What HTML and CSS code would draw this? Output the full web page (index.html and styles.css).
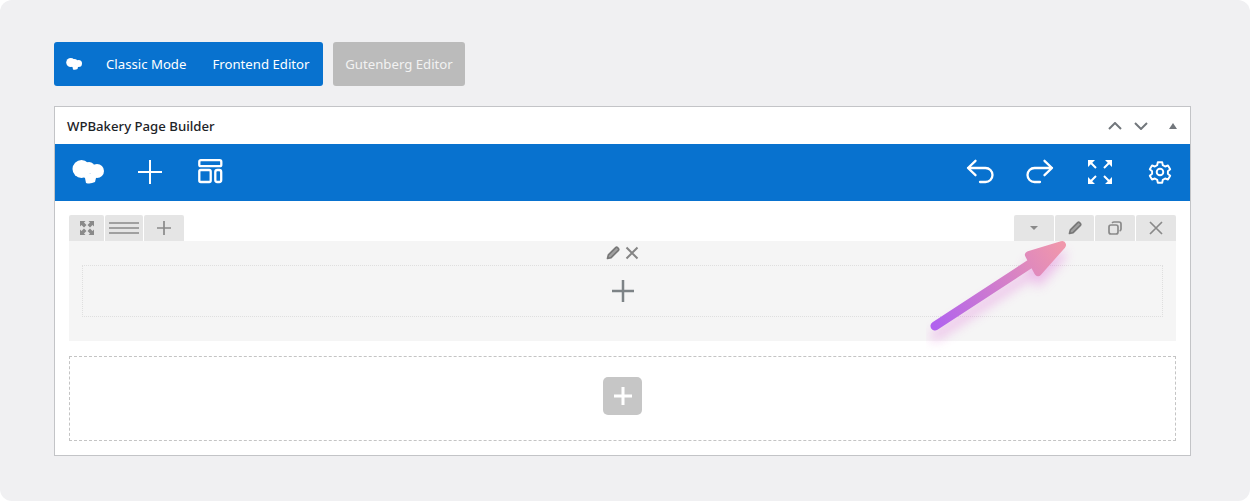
FILE: index.html
```html
<!DOCTYPE html>
<html lang="en">
<head>
<meta charset="utf-8">
<title>WPBakery Page Builder</title>
<link rel="stylesheet" href="styles.css">
</head>
<body>
<main class="frame">
  <div class="mode-row">
    <div class="mode-group">
      <svg class="mode-logo" viewBox="0 0 32 24" aria-hidden="true"><g class="fill-white"><circle cx="9.500" cy="9" r="9"/><circle cx="17" cy="8" r="6"/><circle cx="25" cy="11" r="7"/><path d="M8 14h17l-2 8c-3 1.500-6 2-9 1l-1-5z"/></g></svg>
      <span class="mode-link">Classic Mode</span>
      <span class="mode-link">Frontend Editor</span>
    </div>
    <div class="gutenberg">Gutenberg Editor</div>
  </div>

  <section class="box">
    <header class="box-head">
      <h2 class="box-title">WPBakery Page Builder</h2>
      <div class="box-arrows">
        <svg class="chev" viewBox="0 0 14 8"><path d="M1 7l6-6 6 6"/></svg>
        <svg class="chev chev-down" viewBox="0 0 14 8"><path d="M1 1l6 6 6-6"/></svg>
        <svg class="tri" viewBox="0 0 8 6"><path d="M4 0l4 6H0z"/></svg>
      </div>
    </header>

    <nav class="toolbar">
      <div class="tool-left">
        <svg class="tb-logo" viewBox="0 0 32 24" aria-hidden="true"><g class="fill-white"><circle cx="9.500" cy="9" r="9"/><circle cx="17" cy="8" r="6"/><circle cx="25" cy="11" r="7"/><path d="M8 14h17l-2 8c-3 1.500-6 2-9 1l-1-5z"/></g></svg>
        <svg class="tb-icon" viewBox="0 0 26 26"><path class="stroke-white" d="M13 1v24M1 13h24"/></svg>
        <svg class="tb-icon" viewBox="0 0 26 26"><g class="stroke-white bold"><rect x="2.300" y="1.200" width="22" height="6" rx="1.500"/><rect x="2.300" y="11" width="11.400" height="12" rx="1.500"/><rect x="18.300" y="11" width="5.900" height="12" rx="2"/></g></svg>
      </div>
      <div class="tool-right">
        <svg class="tb-wide" viewBox="0 0 28 26"><path class="stroke-white round bold" d="M9.500 1.800L2 9l7.500 7.200M2 9h17.500a7 7 0 0 1 0 14H14"/></svg>
        <svg class="tb-wide" viewBox="0 0 28 26"><path class="stroke-white round bold" d="M18.500 1.800L26 9l-7.500 7.200M26 9H8.500a7 7 0 0 0 0 14H14"/></svg>
        <svg class="tb-wide" viewBox="-1 0 28 26"><path class="stroke-white" d="M3 3l6 6M17 9l6-6M3 23l6-6M17 17l6 6"/><path class="fill-white" d="M1 1h7L1 8zM25 1v7l-7-7zM1 25v-7l7 7zM25 25h-7l7-7z"/></svg>
        <svg class="tb-wide" viewBox="-2 0 28 24"><g class="stroke-white thin round"><circle cx="12" cy="12" r="3.300"/><path d="M9.800 2.200h4.400l.6 3 2.300 1.300 2.900-1 2.200 3.800-2.300 2v2.400l2.300 2-2.200 3.800-2.900-1-2.300 1.300-.6 3H9.800l-.6-3-2.300-1.300-2.900 1-2.200-3.800 2.300-2v-2.400l-2.300-2L4 5.500l2.900 1 2.300-1.300z"/></g></svg>
      </div>
    </nav>

    <div class="canvas">
      <div class="row-block">
        <div class="row-tabs">
          <div class="tab-group">
            <span class="tab tab-s"><svg class="ti" viewBox="0 0 14 14"><path class="fill-grey" d="M0 0h5.500L4 1.500 6.500 4 4 6.500 1.500 4 0 5.500zM14 0v5.500L12.500 4 10 6.500 7.500 4 10 1.500 8.500 0zM0 14V8.500L1.500 10 4 7.500 6.500 10 4 12.500 5.500 14zM14 14H8.500l1.500-1.500L7.500 10 10 7.500l2.500 2.500L14 8.500z"/></svg></span>
            <span class="tab tab-m"><svg class="ti-lines" viewBox="0 0 30 12"><path class="stroke-lines" d="M0 1h30M0 6h30M0 11h30"/></svg></span>
            <span class="tab tab-l"><svg class="ti" viewBox="0 0 14 14"><path class="stroke-grey" d="M7 0v14M0 7h14"/></svg></span>
          </div>
          <div class="tab-group">
            <span class="tab tab-r"><svg class="ti-caret" viewBox="0 0 8 4"><path class="fill-grey" d="M0 0h8L4 4z"/></svg></span>
            <span class="tab tab-e"><svg class="ti" viewBox="0 0 14 14"><path class="pencil" d="M1.500 12.500l.9-3.600 7.300-7.300c.5-.5 1.300-.5 1.800 0l.9.900c.5.500.5 1.300 0 1.800l-7.300 7.300z"/></svg></span>
            <span class="tab tab-r"><svg class="ti" viewBox="0 0 14 14"><g class="stroke-grey round"><rect x="1" y="4" width="9" height="9" rx="2"/><path d="M4.500 1.500C5 1 5.500 1 6 1h5c1 0 2 1 2 2v5c0 .7-.3 1.200-.8 1.600"/></g></svg></span>
            <span class="tab tab-r"><svg class="ti" viewBox="0 0 14 14"><path class="stroke-grey" d="M1 1l12 12M13 1L1 13"/></svg></span>
          </div>
        </div>
        <div class="row-body">
          <div class="col-actions">
            <svg class="ca" viewBox="0 0 14 14"><path class="pencil" d="M1.500 12.500l.9-3.600 7.300-7.300c.5-.5 1.300-.5 1.800 0l.9.900c.5.500.5 1.300 0 1.800l-7.300 7.300z"/></svg>
            <svg class="ca" viewBox="0 0 14 14"><path class="stroke-x" d="M1.500 1.500l11 11M12.500 1.500l-11 11"/></svg>
          </div>
          <div class="column">
            <svg class="col-plus" viewBox="0 0 22 22"><path class="stroke-plus" d="M11 0v22M0 11h22"/></svg>
          </div>
        </div>
      </div>
      <div class="add-zone">
        <span class="add-btn"><svg class="add-plus" viewBox="0 0 18 18"><path class="stroke-add" d="M9 0v18M0 9h18"/></svg></span>
      </div>
    </div>
  </section>

  <svg class="arrow" viewBox="0 0 170 120" aria-hidden="true">
    <defs>
      <linearGradient id="ag" gradientUnits="userSpaceOnUse" x1="9" y1="90" x2="136" y2="9">
        <stop offset="0" stop-color="#b163ee"/>
        <stop offset="1" stop-color="#f097ab"/>
      </linearGradient>
      <filter id="ab" x="-30%" y="-30%" width="160%" height="160%"><feGaussianBlur stdDeviation="6"/></filter>
    </defs>
    <g filter="url(#ab)" opacity=".42" transform="translate(0 10)">
      <path d="M9 90L107 26" stroke="#e070d8" stroke-width="9" stroke-linecap="round" fill="none"/>
      <path d="M103 19L136 9 112 36z" fill="#e070d8" stroke="#e070d8" stroke-width="8" stroke-linejoin="round"/>
    </g>
    <path d="M9 90L107 26" stroke="url(#ag)" stroke-width="9" stroke-linecap="round" fill="none"/>
    <path d="M103 19L136 9 112 36z" fill="url(#ag)" stroke="url(#ag)" stroke-width="8" stroke-linejoin="round"/>
  </svg>
</main>
</body>
</html>
```
FILE: styles.css
```css
* { box-sizing: border-box; }
html, body { margin: 0; height: 100%; }
body { background: #fff; font-family: "Noto Sans", "Open Sans", sans-serif; }
svg { display: block; }

.frame {
  position: relative;
  width: 1250px;
  height: 501px;
  padding: 42px 59px 0 54px;
  background: #f0f0f2;
  border-radius: 12px;
}

.mode-row { display: flex; gap: 10px; height: 44px; }
.mode-group {
  display: flex;
  align-items: center;
  width: 269px;
  padding-left: 12px;
  background: #0872cf;
  border-radius: 3px;
  color: #fff;
  font-size: 13.200px;
}
.mode-logo { width: 16px; height: 12px; margin-right: 24px; }
.mode-link { margin-right: 26px; white-space: nowrap; }
.mode-link:last-child { margin-right: 0; }
.gutenberg {
  display: flex;
  align-items: center;
  justify-content: center;
  width: 132px;
  background: #bbb;
  border-radius: 3px;
  color: #f2f2f2;
  font-size: 13.200px;
}

.fill-white { fill: #fff; }
.stroke-white { fill: none; stroke: #fff; stroke-width: 2; }
.stroke-add { fill: none; stroke: #fff; stroke-width: 3; }
.bold { stroke-width: 2.300; }
.round { stroke-linecap: round; stroke-linejoin: round; }
.thin { stroke-width: 1.900; }
.fill-grey { fill: #8a8a8a; }
.stroke-grey { fill: none; stroke: #8a8a8a; stroke-width: 1.700; }
.stroke-lines { fill: none; stroke: #a0a0a0; stroke-width: 2; }
.stroke-x { fill: none; stroke: #858585; stroke-width: 2; }
.pencil { fill: #a0a0a0; stroke: #787878; stroke-width: 1.700; stroke-linejoin: round; }
.stroke-plus { fill: none; stroke: #7d8386; stroke-width: 2.500; }

.box {
  margin-top: 20px;
  height: 350px;
  background: #fff;
  border: 1px solid #c3c4c7;
}
.box-head {
  display: flex;
  align-items: center;
  justify-content: space-between;
  height: 37px;
  padding: 0 13px 0 12px;
}
.box-title {
  margin: 0;
  font-size: 13.200px;
  font-weight: 500;
  color: #1d2327;
}
.box-arrows { display: flex; align-items: center; }
.chev { width: 14px; height: 8px; fill: none; stroke: #72777c; stroke-width: 2; }
.chev-down { margin-left: 12px; }
.tri { width: 8px; height: 6px; margin-left: 21px; fill: #72777c; }

.toolbar {
  display: flex;
  align-items: center;
  justify-content: space-between;
  height: 57px;
  padding: 0 16px 0 17px;
  background: #0872cf;
}
.tool-left, .tool-right { display: flex; align-items: center; }
.tool-left { gap: 34px; }
.tool-right { gap: 32px; margin-top: -2px; }
.tb-logo { width: 32px; height: 24px; margin: -2px -1px 0 0; }
.tb-icon { width: 26px; height: 26px; margin-top: -2px; }
.tb-wide { width: 28px; height: 26px; }

.canvas { padding: 14px 14px 0; }
.row-tabs { display: flex; justify-content: space-between; height: 26px; }
.tab-group { display: flex; gap: 1px; }
.tab {
  display: flex;
  align-items: center;
  justify-content: center;
  height: 26px;
  background: #e5e5e5;
  border-radius: 2px 2px 0 0;
}
.tab-s { width: 35px; }
.tab-m { width: 38px; }
.tab-l { width: 40px; }
.tab-r { width: 40px; }
.tab-e { width: 39px; }
.ti { width: 14px; height: 14px; }
.ti-lines { width: 30px; height: 12px; }
.ti-caret { width: 8px; height: 4px; }

.row-body {
  height: 100px;
  padding: 0 13px;
  background: #f5f5f5;
}
.col-actions {
  display: flex;
  align-items: center;
  justify-content: center;
  gap: 5px;
  height: 24px;
}
.ca { width: 14px; height: 14px; }
.column {
  display: flex;
  align-items: center;
  justify-content: center;
  height: 52px;
  border: 1px dotted #dfdfdf;
}
.col-plus { width: 22px; height: 22px; }

.add-zone {
  display: flex;
  align-items: center;
  justify-content: center;
  height: 85px;
  margin-top: 15px;
  padding-bottom: 6px;
  border: 1px dashed #c4c4c4;
}
.add-btn {
  display: flex;
  align-items: center;
  justify-content: center;
  width: 39px;
  height: 38px;
  background: #c6c6c6;
  border-radius: 5px;
}
.add-plus { width: 18px; height: 18px; }

.arrow {
  position: absolute;
  left: 926px;
  top: 236px;
  width: 170px;
  height: 120px;
}
```
